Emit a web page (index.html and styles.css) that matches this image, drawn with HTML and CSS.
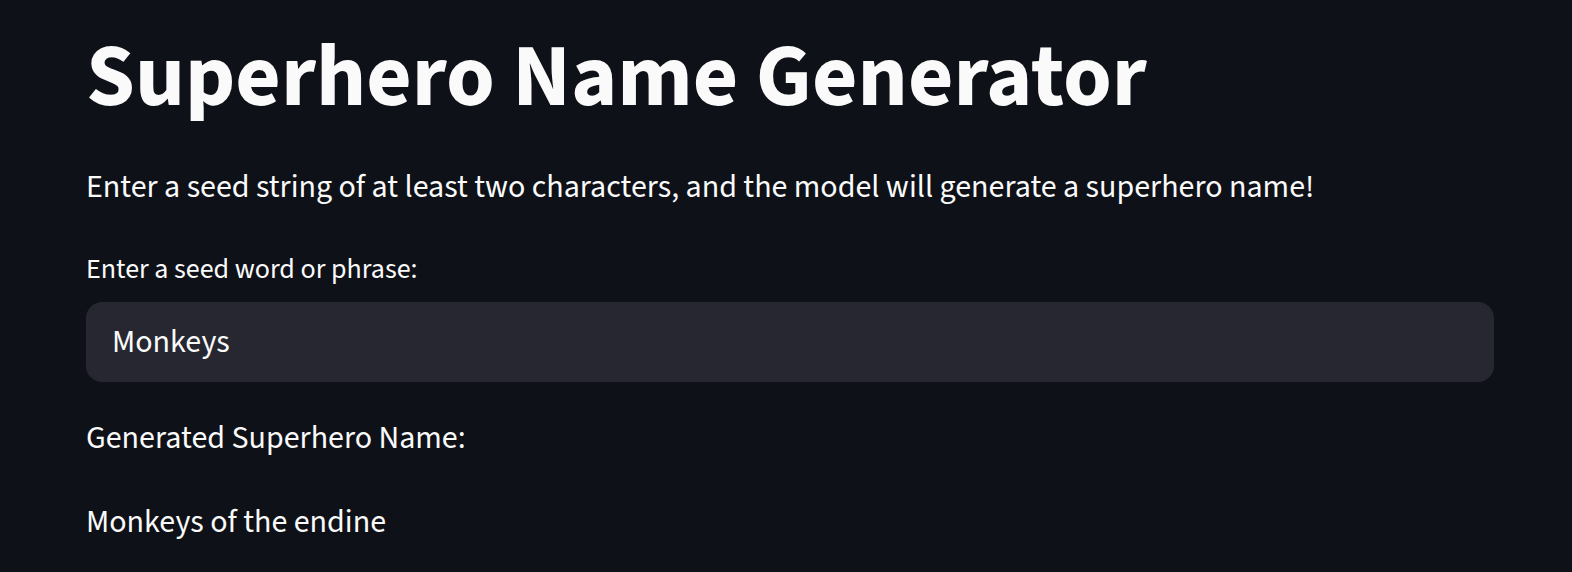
FILE: index.html
```html
<!DOCTYPE html>
<html lang="en">
<head>
<meta charset="utf-8">
<title>Superhero Name Generator</title>
<link rel="stylesheet" href="styles.css">
</head>
<body>
<main class="main">
  <h1 class="title">Superhero Name Generator</h1>
  <p class="intro">Enter a seed string of at least two characters, and the model will generate a superhero name!</p>
  <div class="field">
    <label class="field-label" for="seed">Enter a seed word or phrase:</label>
    <input class="field-input" id="seed" type="text" value="Monkeys">
  </div>
  <p class="result-label">Generated Superhero Name:</p>
  <p class="result">Monkeys of the endine</p>
</main>
</body>
</html>
```
FILE: styles.css
```css
html, body {
  margin: 0;
  padding: 0;
  background: #0e1117;
}
body {
  font-family: "Source Sans 3", "Source Sans Pro", Lato, sans-serif;
  color: #fafafa;
  overflow: hidden;
}
.main {
  display: flex;
  flex-direction: column;
  padding: 25px 78px 0 86px;
}
.title {
  margin: 0;
  font-size: 88px;
  font-weight: 700;
  line-height: 1.2;
}
.intro {
  margin: 31px 0 0;
  font-size: 32px;
  line-height: 1.6;
}
.field {
  display: flex;
  flex-direction: column;
  margin-top: 34px;
}
.field-label {
  font-size: 28px;
  line-height: 1.6;
}
.field-input {
  margin-top: 10px;
  box-sizing: border-box;
  width: 1408px;
  height: 80px;
  padding: 0 24px;
  border: 2px solid #262730;
  border-radius: 16px;
  background: #262730;
  color: #fafafa;
  font: inherit;
  font-size: 32px;
  outline: none;
}
.result-label {
  margin: 31px 0 0;
  font-size: 32px;
  line-height: 1.6;
}
.result {
  margin: 33px 0 0;
  font-size: 32px;
  line-height: 1.6;
}
```
